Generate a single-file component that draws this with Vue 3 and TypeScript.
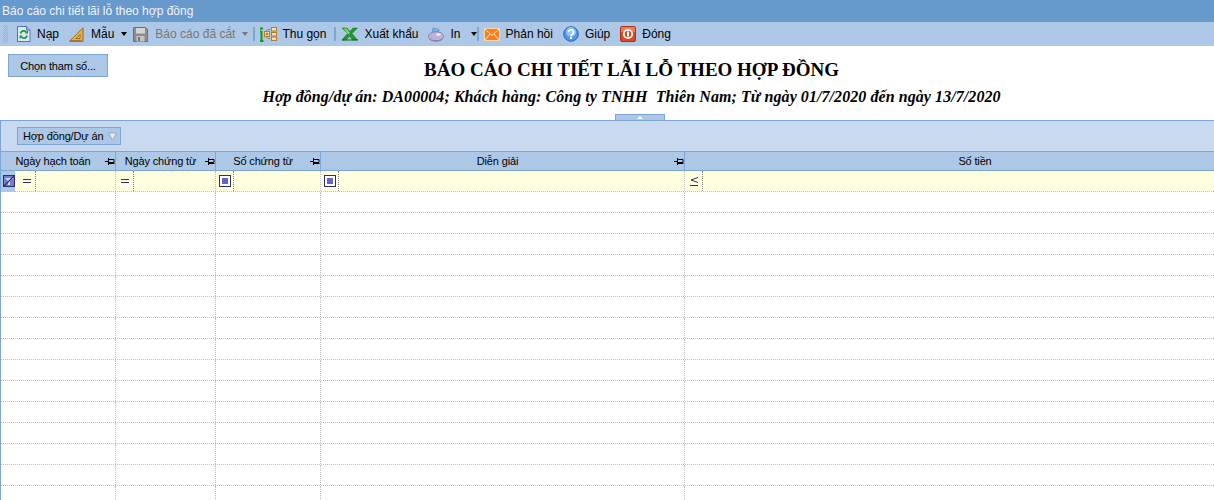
<template>
  <div class="page">
    <div class="title-bar">Báo cáo chi tiết lãi lỗ theo hợp đồng</div>

    <div class="toolbar">
      <span class="grip"></span>
      <span class="tool t-nap">
        <svg width="14" height="16" viewBox="0 0 14 16">
          <path d="M.5.5h9l3.500 3.500v11.500h-12.500z" fill="#dfe8f8" stroke="#5570ab" />
          <path d="M9.500.5v3.500h3.500" fill="#aebfe2" stroke="#5570ab" />
          <path d="M3.500 7.500a3.200 3.200 0 0 1 5.600-1.500" fill="none" stroke="#14a02c" stroke-width="1.800" />
          <path d="M7.500 7.500h3.500v-3.500z" fill="#14a02c" />
          <path d="M10 9.500a3.200 3.200 0 0 1-5.600 1.500" fill="none" stroke="#14a02c" stroke-width="1.800" />
          <path d="M6 9.500h-3.500v3.500z" fill="#14a02c" />
        </svg>
        Nạp
      </span>
      <span class="tool t-mau">
        <svg width="15" height="15" viewBox="0 0 15 15">
          <path d="M14 .8v13.500h-13.500z" fill="#e8b04c" stroke="#9a6a1e" />
          <path d="M11 7.500v4h-4z" fill="#b4cbe9" stroke="#9a6a1e" />
          <path d="M3 13v1.200M5 13v1.200M7 13v1.200M9 13v1.200M11 13v1.200" stroke="#7a4f12" />
        </svg>
        Mẫu
      </span>
      <span class="arrow a-mau"></span>
      <span class="tool t-save">
        <svg width="15" height="15" viewBox="0 0 15 15">
          <path d="M.5.5h12l2 2v12h-14z" fill="#8d8d8d" stroke="#6f6f6f" />
          <rect x="3" y="1" width="9" height="5.500" fill="#d5d5d5" />
          <rect x="3.500" y="9" width="8" height="5.500" fill="#c4c4c4" />
          <rect x="5" y="10" width="2" height="4" fill="#777" />
        </svg>
      </span>
      <span class="tool t-cut">Báo cáo đã cắt</span>
      <span class="arrow a-cut"></span>
      <span class="sep s-1"></span>
      <span class="tool t-thu">
        <svg width="17" height="16" viewBox="0 0 17 16">
          <path d="M0 2.500h3M1.500 5v10M0 15h3.500M0 5.500h1.500" stroke="#0f9b16" stroke-width="2" fill="none" />
          <path d="M8 3.500h2M8 8h2M8 12.500h2M7 3.500v9" stroke="#a9783a" fill="none" />
          <rect x="4.500" y="5.500" width="5" height="5" fill="#fbe9a5" stroke="#b57b2d" />
          <rect x="11.500" y="1.500" width="5" height="3.500" fill="#fbe0b5" stroke="#b57b2d" />
          <rect x="11.500" y="6.500" width="5" height="3.500" fill="#fbe0b5" stroke="#b57b2d" />
          <rect x="11.500" y="11" width="5" height="3.500" fill="#fbe0b5" stroke="#b57b2d" />
          <path d="M7 6.500v3M5.500 8h3" stroke="#b5531e" />
        </svg>
        Thu gọn
      </span>
      <span class="sep s-2"></span>
      <span class="tool t-excel">
        <svg width="16" height="14" viewBox="0 0 16 14">
          <path d="M0 1h5l3 3.500 3-3.500h4.500l-5.500 5.500 5.500 6.500h-5l-3-4-3.200 4h-4.300l5.500-6.500z" fill="#1f9a32" stroke="#0d6a1f" stroke-width=".5" />
          <path d="M1.500 1.500h3l3.500 4.500-2 1.500z" fill="#7fd36a" />
          <path d="M0 12.500h16v1h-16z" fill="#0d6a1f" />
        </svg>
        Xuất khẩu
      </span>
      <span class="tool t-print">
        <svg width="16" height="15" viewBox="0 0 16 15">
          <path d="M4 6l1-5 6 1.500-1 4.500z" fill="#77b4f0" stroke="#4f86c6" stroke-width=".6" />
          <ellipse cx="8" cy="9.500" rx="7.500" ry="4.800" fill="#b9b3dc" stroke="#8781b3" />
          <path d="M1.500 11.500c2 2 11 2 13 0v1c-2 2-11 2-13 0z" fill="#8781b3" />
          <ellipse cx="10.500" cy="7.500" rx="2.500" ry="1.300" fill="#f1effa" />
        </svg>
        In
      </span>
      <span class="arrow a-in"></span>
      <span class="sep s-3"></span>
      <span class="tool t-mail">
        <svg width="16" height="13" viewBox="0 0 16 13">
          <rect x=".5" y=".5" width="15" height="12" fill="#f87e1e" stroke="#fbd3a6" />
          <path d="M1 1l7 6.500 7-6.500M1 12l5-6M15 12l-5-6" stroke="#ffe9c8" fill="none" />
        </svg>
        Phản hồi
      </span>
      <span class="tool t-help">
        <svg width="16" height="16" viewBox="0 0 16 16">
          <circle cx="8" cy="8" r="7.300" fill="#4f97e3" stroke="#2666b2" />
          <circle cx="8" cy="6" r="5" fill="#8cc2f4" />
          <path d="M5.700 6.200a2.400 2.400 0 1 1 3.600 2c-.9.5-1.300 1-1.300 1.800" fill="none" stroke="#fff" stroke-width="1.700" />
          <rect x="7" y="11" width="2" height="2" fill="#fff" />
        </svg>
        Giúp
      </span>
      <span class="tool t-close">
        <svg width="16" height="16" viewBox="0 0 16 16">
          <rect x=".5" y=".5" width="15" height="15" rx="1.500" fill="#dc4a22" stroke="#a83414" />
          <rect x="1" y="1" width="14" height="5" fill="#ee7b55" />
          <circle cx="8" cy="8" r="4.200" fill="#dc4a22" stroke="#fff" stroke-width="1.800" />
          <rect x="7" y="5.500" width="2" height="5" fill="#fff" />
        </svg>
        Đóng
      </span>
    </div>

    <div class="report">
      <button class="params" type="button">Chọn tham số...</button>
      <div class="heading">
        <h1>BÁO CÁO CHI TIẾT LÃI LỖ THEO HỢP ĐỒNG</h1>
        <h2>Hợp đồng/dự án: DA00004; Khách hàng: Công ty TNHH&nbsp; Thiên Nam; Từ ngày 01/7/2020 đến ngày 13/7/2020</h2>
      </div>
    </div>
    <div class="splitter-row">
      <span class="splitter"><i></i></span>
    </div>

    <div class="grid-wrap">
      <div class="group-panel">
        <span class="chip">
          Hợp đồng/Dự án
          <svg width="9" height="9" viewBox="0 0 9 9">
            <path d="M.5 1h8l-4 7z" fill="#e4ecf7" stroke="#9aa6b6" />
          </svg>
        </span>
      </div>

      <div class="row head">
        <div v-for="col in columns" :key="col.title" class="hcell">
          <span class="htext">{{ col.title }}</span>
          <svg v-if="col.pin" class="pin" width="10" height="7" viewBox="0 0 10 7">
            <path d="M0 3.500h3M3.500 0v7M3.500 1.500h5.500v3h-5.500M3.500 5.500h6" stroke="#000" fill="none" />
          </svg>
        </div>
      </div>

      <div class="row filter">
        <div v-for="(col, i) in columns" :key="col.title" class="fcell" :class="{ first: i === 0 }">
          <span v-if="i === 0" class="indicator">
            <svg width="12" height="12" viewBox="0 0 12 12">
              <rect x=".5" y=".5" width="11" height="11" fill="#6f7fd6" stroke="#2f2f6e" />
              <path d="M2 3h8l-3 3v4h-2v-4z" fill="#cfdaf7" />
              <path d="M1 11L11 1" stroke="#2f2f6e" stroke-width="1.100" />
            </svg>
          </span>
          <span class="op" :class="'op-' + col.op">
            <i v-if="col.op === 'eq'" class="eq"></i>
            <svg v-else-if="col.op === 'le'" width="8" height="9" viewBox="0 0 8 9">
              <path d="M8 .5l-7 2.500 7 2.500M0 8.500h8" stroke="#2f2f6e" fill="none" />
            </svg>
            <i v-else class="box"><b></b></i>
          </span>
        </div>
      </div>

      <div v-for="r in rowCount" :key="r" class="row body">
        <div v-for="col in columns" :key="col.title" class="cell"></div>
      </div>
    </div>
  </div>
</template>

<script setup lang="ts">
interface Column {
  title: string;
  pin: boolean;
  op: 'eq' | 'le' | 'box';
}

const columns: Column[] = [
  { title: 'Ngày hạch toán', pin: true, op: 'eq' },
  { title: 'Ngày chứng từ', pin: true, op: 'eq' },
  { title: 'Số chứng từ', pin: true, op: 'box' },
  { title: 'Diễn giải', pin: true, op: 'box' },
  { title: 'Số tiền', pin: false, op: 'le' },
];

const rowCount = 15;
</script>

<style>
html,
body {
  margin: 0;
  overflow: hidden;
  background: #fff;
}
</style>

<style scoped>
.page {
  width: 1214px;
  height: 500px;
  overflow: hidden;
  font-family: "Liberation Sans", Arial, sans-serif;
  font-size: 12px;
  color: #000;
}

.title-bar {
  height: 22px;
  line-height: 23px;
  padding-left: 2px;
  background: #6699cc;
  color: #eef4fb;
}

.toolbar {
  height: 24px;
  display: flex;
  align-items: center;
  background: #adc8e6;
}

.grip {
  width: 5px;
  height: 18px;
  margin-left: 3px;
  background: conic-gradient(#9fb3cc 25%, transparent 0 50%, #9fb3cc 0 75%, transparent 0) 0 0 / 2px 2px;
}

.tool {
  display: flex;
  align-items: center;
  gap: 6px;
  white-space: nowrap;
}

.t-nap { margin-left: 9px; }
.t-mau { margin-left: 10px; gap: 7px; }
.t-save { margin-left: 6px; }
.t-cut { margin-left: 7px; color: #777; }
.t-thu { margin-left: 5px; gap: 5px; }
.t-excel { margin-left: 6px; }
.t-print { margin-left: 9px; gap: 7px; }
.t-mail { margin-left: 5px; }
.t-help { margin-left: 10px; }
.t-close { margin-left: 10px; }

.arrow {
  width: 0;
  height: 0;
  border: 3.5px solid transparent;
  border-top: 4px solid #000;
  border-bottom: 0;
}

.a-mau { margin-left: 7px; }
.a-cut { margin-left: 7px; border-top-color: #777; }
.a-in { margin-left: 10px; }

.sep {
  width: 2px;
  height: 14px;
  background: #7da5d6;
}

.s-1 { margin-left: 5px; }
.s-2 { margin-left: 8px; }
.s-3 { margin-left: 0; }

.report {
  height: 68px;
  display: grid;
}

.params,
.heading {
  grid-area: 1 / 1;
}

.params {
  justify-self: start;
  align-self: start;
  width: 100px;
  height: 23px;
  margin: 8px 0 0 8px;
  padding: 0;
  background: #adc8e6;
  border: 1px solid #7da5d6;
  font: inherit;
  font-size: 11px;
  letter-spacing: -0.15px;
  color: #000;
}

.heading {
  padding-left: 49px;
  text-align: center;
  font-family: "Liberation Serif", "Times New Roman", serif;
}

.heading h1 {
  margin: 13px 0 0;
  font-size: 19px;
  line-height: 22px;
  font-weight: bold;
}

.heading h2 {
  margin: 6px 0 0;
  font-size: 16px;
  line-height: 20px;
  font-style: italic;
  font-weight: bold;
  letter-spacing: 0.07px;
}

.splitter-row {
  height: 6px;
  display: flex;
  padding-left: 615px;
}

.splitter {
  width: 50px;
  height: 6px;
  box-sizing: border-box;
  background: #adc8e6;
  border: 1px solid #7da5d6;
  border-bottom: 0;
  display: flex;
  justify-content: center;
  padding-top: 1px;
}

.splitter i {
  width: 0;
  height: 0;
  border: 3px solid transparent;
  border-bottom: 3px solid #fff;
  border-top: 0;
}

.grid-wrap {
  width: 1265px;
  border-top: 1px solid #7da5d6;
  border-left: 1px solid #7da5d6;
}

.group-panel {
  height: 30px;
  box-sizing: border-box;
  padding: 6px 0 0 16px;
  background: #c9daf0;
}

.chip {
  display: inline-flex;
  align-items: center;
  gap: 5px;
  height: 18px;
  width: 104px;
  box-sizing: border-box;
  padding-left: 5px;
  background: #adc8e6;
  border: 1px solid #7da5d6;
  font-size: 11px;
  letter-spacing: -0.15px;
  white-space: nowrap;
}

.row {
  display: grid;
  grid-template-columns: 115px 100px 105px 364px 580px;
}

.head {
  height: 20px;
  box-sizing: border-box;
  background: #adc8e6;
  border-top: 1px solid #7da5d6;
  border-bottom: 1px solid #7da5d6;
  font-size: 11px;
  letter-spacing: -0.15px;
}

.hcell {
  display: flex;
  align-items: center;
  border-right: 1px solid #7da5d6;
}

.hcell:last-child {
  border-right: 0;
}

.htext {
  flex: 1;
  text-align: center;
  white-space: nowrap;
}

.pin {
  flex: none;
}

.filter {
  height: 21px;
  box-sizing: border-box;
  background: #ffffe0;
  border-bottom: 1px dotted #c0c0c0;
}

.fcell {
  display: flex;
  align-items: stretch;
  border-right: 1px dotted #c0c0c0;
}

.fcell:last-child {
  border-right: 0;
}

.indicator {
  width: 14px;
  box-sizing: border-box;
  padding: 4px 0 0 2px;
  margin-bottom: -1px;
  background: #adc8e6;
}

.op {
  display: flex;
  align-items: center;
  justify-content: center;
  width: 18px;
  box-sizing: border-box;
  border-right: 1px dotted #808080;
}

.fcell.first .op {
  margin-left: 3px;
}

.op-box {
  justify-content: flex-start;
  padding-left: 3px;
}

.eq {
  width: 8px;
  height: 2px;
  border-top: 1px solid #2f2f6e;
  border-bottom: 1px solid #2f2f6e;
}

.box {
  width: 12px;
  height: 12px;
  box-sizing: border-box;
  border: 1px solid #2f2f6e;
  background: #fff;
  display: flex;
  align-items: center;
  justify-content: center;
}

.box b {
  width: 6px;
  height: 6px;
  background: #6464d2;
}

.body {
  height: 21px;
  box-sizing: border-box;
  border-bottom: 1px dotted #c0c0c0;
}

.cell {
  border-right: 1px dotted #c0c0c0;
}

.cell:last-child {
  border-right: 0;
}
</style>
